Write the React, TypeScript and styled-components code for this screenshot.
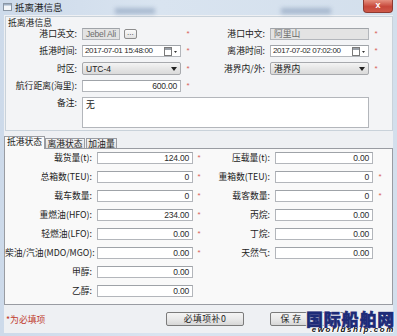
import React from 'react';
import styled, { createGlobalStyle } from 'styled-components';

const cjk = `"Noto Sans CJK SC", "Liberation Sans", sans-serif`;
const num = `"Liberation Sans", "Noto Sans CJK SC", sans-serif`;

const Global = createGlobalStyle`
  html, body { margin: 0; padding: 0; background: #d6e1ee; }
  body { width: 397px; height: 336px; overflow: hidden; font-family: ${cjk}; }
  * { box-sizing: border-box; }
`;

const Window = styled.div`
  position: relative;
  width: 397px;
  height: 336px;
  display: flex;
  flex-direction: column;
  background: linear-gradient(90deg, #cddaea, #d9e4f0 40%, #d3dfec);
  overflow: hidden;
`;

const TitleBar = styled.div`
  height: 15px;
  flex: none;
  display: flex;
  align-items: flex-start;
  padding: 0 4px 0 3px;
`;

const TitleIcon = styled.svg`
  margin-top: 3px;
  flex: none;
`;

const TitleText = styled.div`
  margin-left: 3px;
  margin-top: 1px;
  font-size: 9.5px;
  line-height: 12px;
  color: #1e1e1e;
`;

const Haze = styled.div<{ $ml: number; $w: number }>`
  margin-left: ${(p) => p.$ml}px;
  width: ${(p) => p.$w}px;
  height: 6px;
  margin-top: 8px;
  background: rgba(80, 110, 150, 0.35);
  filter: blur(2px);
  flex: none;
`;

const CloseBtn = styled.div`
  margin-left: auto;
  width: 30px;
  height: 13px;
  border: 1px solid #8e3a31;
  border-top: none;
  border-radius: 0 0 4px 4px;
  background: linear-gradient(#e5907f, #c7473a 55%, #cf5a4a);
  color: #fff;
  font-family: ${num};
  font-weight: bold;
  font-size: 9px;
  line-height: 11px;
  text-align: center;
`;

const Client = styled.div`
  flex: 1;
  margin: 0 4px 3px 4px;
  background: #eef0f3;
  display: flex;
  flex-direction: column;
`;

const Group = styled.div`
  margin: 1px 0 0 1px;
  height: 115px;
  border: 1px solid #c9d2da;
  background: #f3f4f6;
  padding: 1px 0 0 2px;
  display: flex;
  flex-direction: column;
`;

const GroupLabel = styled.div`
  height: 10px;
  font-size: 8.8px;
  line-height: 10px;
  color: #1e1e1e;
`;

const TopGrid = styled.div`
  display: grid;
  margin-left: -2px;
  grid-template-columns: 76px 99px 14px 75px 99px 14px;
  grid-template-rows: 12px 12px 13px 12px 31px;
  row-gap: 5px;
`;

const Label = styled.div<{ $pr?: number; $top?: boolean }>`
  font-size: 8.8px;
  line-height: 12px;
  color: #222;
  text-align: right;
  white-space: nowrap;
  padding-right: ${(p) => p.$pr ?? 5}px;
  align-self: ${(p) => (p.$top ? 'start' : 'center')};
`;

const Star = styled.div`
  color: #d8605a;
  font-family: ${num};
  font-size: 8px;
  line-height: 12px;
  text-align: center;
  align-self: center;
`;

const Box = styled.div<{ $right?: boolean; $disabled?: boolean }>`
  height: 100%;
  min-width: 0;
  border: 1px solid #b3b6bb;
  border-top-color: #9fa3a8;
  background: ${(p) => (p.$disabled ? '#e3e3e3' : '#ffffff')};
  color: ${(p) => (p.$disabled ? '#6d6d6d' : '#2b2b2b')};
  font-family: ${num};
  font-size: 8.5px;
  letter-spacing: -0.2px;
  line-height: 10px;
  padding: 0 3px;
  display: flex;
  align-items: center;
  justify-content: ${(p) => (p.$right ? 'flex-end' : 'flex-start')};
  white-space: nowrap;
  overflow: hidden;
`;

const CjkText = styled.span`
  font-family: ${cjk};
  font-size: 8.8px;
  letter-spacing: 0;
`;

const FieldRow = styled.div`
  display: flex;
  gap: 4px;
  height: 100%;
`;

const DotsButton = styled.div`
  width: 13px;
  flex: none;
  margin: 1px 0;
  border: 1px solid #8d8d8d;
  border-radius: 2px;
  background: linear-gradient(#fbfbfb, #e2e2e2);
  font-family: ${num};
  font-size: 8px;
  line-height: 5px;
  text-align: center;
  color: #333;
`;

const DateBox = styled(Box)`
  justify-content: space-between;
  padding-right: 2px;
  padding-left: 2px;
`;

const DateText = styled.span`
  font-size: 8px;
  letter-spacing: -0.35px;
`;

const Combo = styled.div`
  height: 100%;
  border: 1px solid #a7a9ad;
  border-radius: 2px;
  background: linear-gradient(#f4f4f4, #e6e6e6 50%, #dadada);
  display: flex;
  align-items: center;
  justify-content: space-between;
  padding: 0 3px 0 3px;
  font-size: 8.8px;
  color: #222;
`;

const ComboText = styled.span<{ $num?: boolean }>`
  font-family: ${(p) => (p.$num ? num : cjk)};
  font-size: ${(p) => (p.$num ? '8.5px' : '8.8px')};
`;

const TextArea = styled.div`
  grid-column: 2 / 6;
  border: 1px solid #b3b6bb;
  background: #fff;
  padding: 1px 3px;
  font-size: 8.8px;
  line-height: 11px;
  color: #222;
`;

const Tabs = styled.div`
  margin-top: 5px;
  display: flex;
  flex-direction: column;
`;

const TabStrip = styled.div`
  display: flex;
  align-items: flex-end;
  height: 13px;
  position: relative;
  z-index: 1;
  margin-bottom: -1px;
`;

const Tab = styled.div<{ $active?: boolean; $w: number }>`
  width: ${(p) => p.$w}px;
  height: ${(p) => (p.$active ? 13 : 11)}px;
  margin-right: ${(p) => (p.$active ? 0 : 1)}px;
  border: 1px solid #999ca2;
  border-bottom: ${(p) => (p.$active ? 'none' : '1px solid #999ca2')};
  background: ${(p) => (p.$active ? '#fafafa' : 'linear-gradient(#f3f3f3, #e1e1e1)')};
  font-size: 8.8px;
  line-height: 10px;
  text-align: center;
  color: #222;
  white-space: nowrap;
`;

const Panel = styled.div`
  height: 157px;
  border: 1px solid #999ca2;
  background: #f9f9f9;
  padding-top: 3px;
`;

const PanelGrid = styled.div`
  display: grid;
  grid-template-columns: 92px 96px 12px 70px 98px 14px;
  grid-auto-rows: 12px;
  row-gap: 7px;
`;

const Footer = styled.div`
  flex: 1;
  display: flex;
  align-items: center;
  padding: 0 47px 0 2px;
`;

const Required = styled.div`
  color: #c0392b;
  font-size: 8.8px;
  line-height: 10px;
  margin-top: 1px;
`;

const Buttons = styled.div`
  margin-left: auto;
  display: flex;
  gap: 26px;
`;

const Button = styled.div<{ $w: number; $shift?: number }>`
  width: ${(p) => p.$w}px;
  height: 14px;
  border: 1px solid #7b7b7b;
  border-radius: 2px;
  background: linear-gradient(#f4f4f4, #e9e9e9 50%, #d7d7d7);
  font-size: 8.8px;
  line-height: 12px;
  text-align: center;
  padding-right: ${(p) => p.$shift ?? 0}px;
  color: #222;
  letter-spacing: 0.5px;
`;

const Watermark = styled.div`
  position: absolute;
  right: 2px;
  bottom: 2px;
  display: flex;
  flex-direction: column;
  align-items: flex-end;
`;

const WmTitle = styled.div`
  font-family: ${cjk};
  font-weight: 900;
  font-size: 17px;
  line-height: 15px;
  letter-spacing: 0.8px;
  color: #1d2b78;
  -webkit-text-stroke: 0.6px #1d2b78;
  text-shadow: 1px 0 #fff, -1px 0 #fff, 0 1px #fff, 0 -1px #fff;
`;

const WmSub = styled.div`
  font-family: ${num};
  font-weight: bold;
  font-style: italic;
  font-size: 8px;
  line-height: 8px;
  letter-spacing: 1.6px;
  color: #111;
  text-shadow: 1px 0 #fff, -1px 0 #fff, 0 1px #fff;
`;

const CalIcon = () => (
  <svg width="14" height="9" viewBox="0 0 14 9">
    <rect x="0.5" y="0.5" width="7" height="8" fill="#fff" stroke="#7a7a7a" />
    <rect x="1" y="1" width="6" height="2" fill="#9aa0a8" />
    <path d="M10 4 L13 4 L11.5 6 Z" fill="#333" />
  </svg>
);

const Arrow = () => (
  <svg width="6" height="4" viewBox="0 0 6 4">
    <path d="M0 0 L6 0 L3 4 Z" fill="#222" />
  </svg>
);

type Row = [string, string, boolean];

const leftRows: Row[] = [
  ['载货量(t):', '124.00', true],
  ['总箱数(TEU):', '0', true],
  ['载车数量:', '0', true],
  ['重燃油(HFO):', '234.00', true],
  ['轻燃油(LFO):', '0.00', true],
  ['柴油/汽油(MDO/MGO):', '0.00', true],
  ['甲醇:', '0.00', false],
  ['乙醇:', '0.00', false],
];

const rightRows: Row[] = [
  ['压载量(t):', '0.00', false],
  ['重箱数(TEU):', '0', true],
  ['载客数量:', '0', true],
  ['丙烷:', '0.00', false],
  ['丁烷:', '0.00', false],
  ['天然气:', '0.00', false],
];

export default function App() {
  return (
    <>
      <Global />
      <Window>
        <TitleBar>
          <TitleIcon width="9" height="8" viewBox="0 0 9 8">
            <rect x="0.5" y="0.5" width="8" height="7" fill="#f4f6f8" stroke="#8a96a4" />
            <rect x="1" y="1" width="7" height="1.5" fill="#9fb0c4" />
          </TitleIcon>
          <TitleText>抵离港信息</TitleText>
          <Haze $ml={52} $w={40} />
          <Haze $ml={126} $w={50} />
          <CloseBtn>x</CloseBtn>
        </TitleBar>
        <Client>
          <Group>
            <GroupLabel>抵离港信息</GroupLabel>
            <TopGrid>
              <Label>港口英文:</Label>
              <FieldRow>
                <Box $disabled>Jebel Ali</Box>
                <DotsButton>...</DotsButton>
              </FieldRow>
              <Star>*</Star>
              <Label>港口中文:</Label>
              <Box $disabled>
                <CjkText>阿里山</CjkText>
              </Box>
              <Star>*</Star>

              <Label>抵港时间:</Label>
              <DateBox>
                <DateText>2017-07-01 15:48:00</DateText>
                <CalIcon />
              </DateBox>
              <Star>*</Star>
              <Label>离港时间:</Label>
              <DateBox>
                <DateText>2017-07-02 07:02:00</DateText>
                <CalIcon />
              </DateBox>
              <Star>*</Star>

              <Label>时区:</Label>
              <Combo>
                <ComboText $num>UTC-4</ComboText>
                <Arrow />
              </Combo>
              <Star>*</Star>
              <Label>港界内/外:</Label>
              <Combo>
                <ComboText>港界内</ComboText>
                <Arrow />
              </Combo>
              <Star>*</Star>

              <Label>航行距离(海里):</Label>
              <Box $right>600.00</Box>
              <Star>*</Star>
              <div />
              <div />
              <div />

              <Label $top>备注:</Label>
              <TextArea>无</TextArea>
            </TopGrid>
          </Group>

          <Tabs>
            <TabStrip>
              <Tab $active $w={41}>抵港状态</Tab>
              <Tab $w={40}>离港状态</Tab>
              <Tab $w={31}>加油量</Tab>
            </TabStrip>
            <Panel>
              <PanelGrid>
                {leftRows.map((l, i) => {
                  const r = rightRows[i];
                  return (
                    <React.Fragment key={i}>
                      <Label>{l[0]}</Label>
                      <Box $right>{l[1]}</Box>
                      {l[2] ? <Star>*</Star> : <div />}
                      {r ? <Label>{r[0]}</Label> : <div />}
                      {r ? <Box $right>{r[1]}</Box> : <div />}
                      {r && r[2] ? <Star>*</Star> : <div />}
                    </React.Fragment>
                  );
                })}
              </PanelGrid>
            </Panel>
          </Tabs>

          <Footer>
            <Required>*为必填项</Required>
            <Buttons>
              <Button $w={78}>必填项补0</Button>
              <Button $w={76} $shift={34}>保 存</Button>
            </Buttons>
          </Footer>
        </Client>
        <Watermark>
          <WmTitle>国际船舶网</WmTitle>
          <WmSub>eworldship.com</WmSub>
        </Watermark>
      </Window>
    </>
  );
}
